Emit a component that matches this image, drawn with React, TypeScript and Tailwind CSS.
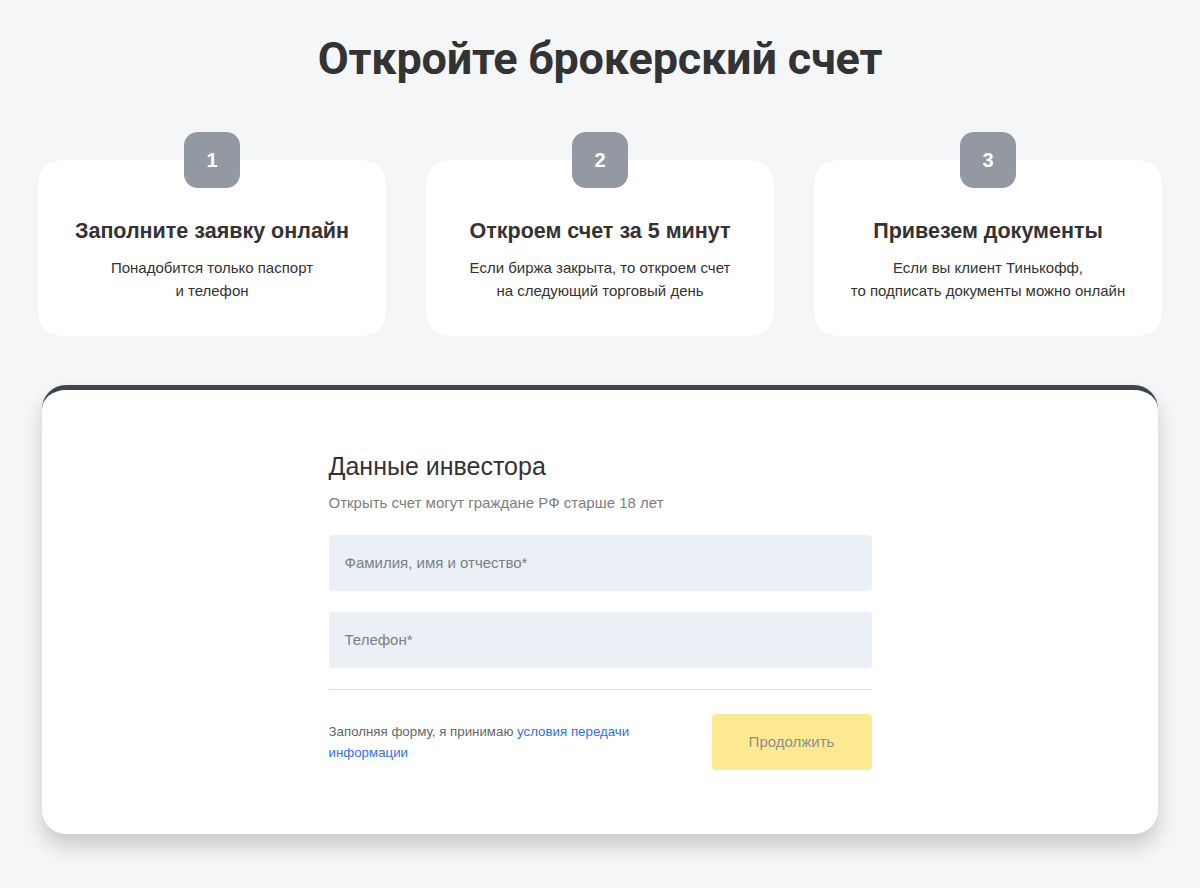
const steps = [
  { n: 1, title: 'Заполните заявку онлайн', text: ['Понадобится только паспорт', 'и телефон'] },
  { n: 2, title: 'Откроем счет за 5 минут', text: ['Если биржа закрыта, то откроем счет', 'на следующий торговый день'] },
  { n: 3, title: 'Привезем документы', text: ['Если вы клиент Тинькофф,', 'то подписать документы можно онлайн'] },
];

export default function App() {
  return (
    <div className="min-h-[888px] bg-[#f5f6f8] font-['Liberation_Sans',Arial,sans-serif] text-[#333333]">
      <h1 className="pt-[33px] text-center font-['Roboto',sans-serif] text-[45px] font-bold leading-[52px] tracking-[-0.2px] text-[#333333]">
        Откройте брокерский счет
      </h1>

      <div className="mx-[38px] mt-[47px] grid grid-cols-3 gap-[40px]">
        {steps.map((s) => (
          <div key={s.n} className="relative mt-[28px] h-[176px] rounded-[24px] bg-white pt-[57px] text-center">
            <div className="absolute left-1/2 top-[-28px] flex h-[56px] w-[56px] -translate-x-1/2 items-center justify-center rounded-[14px] bg-[#9299a2] text-[20px] font-bold text-white">
              {s.n}
            </div>
            <div className="text-[21.5px] font-bold leading-[28px] text-[#333333]">{s.title}</div>
            <div className="mt-[11px] text-[15px] leading-[23px] text-[#333333]">
              {s.text[0]}
              <br />
              {s.text[1]}
            </div>
          </div>
        ))}
      </div>

      <div className="mx-[42px] mt-[49px] rounded-[24px] border-t-[5px] border-[#3e4452] bg-white pb-[64px] pt-[60px] shadow-[0_12px_20px_rgba(0,0,0,0.18)]">
        <div className="mx-auto w-[543px]">
          <h2 className="text-[25px] leading-[32px] text-[#333333]">Данные инвестора</h2>
          <p className="mt-[11px] text-[15px] leading-[20px] text-[#808080]">Открыть счет могут граждане РФ старше 18 лет</p>
          <div className="mt-[22px] flex h-[56px] items-center rounded-[4px] bg-[#ebf0f7] px-[16px] text-[15px] text-[#7a7f87]">
            Фамилия, имя и отчество*
          </div>
          <div className="mt-[21px] flex h-[56px] items-center rounded-[4px] bg-[#ebf0f7] px-[16px] text-[15px] text-[#7a7f87]">
            Телефон*
          </div>
          <div className="mt-[21px] h-px bg-[#dddddd]" />
          <div className="mt-[24px] flex items-center justify-between">
            <p className="w-[330px] text-[13.3px] leading-[21px] text-[#666666]">
              Заполняя форму, я принимаю{' '}
              <a className="text-[#336fee]">
                условия передачи
                <br />
                информации
              </a>
            </p>
            <button className="h-[56px] w-[160px] rounded-[4px] bg-[#fee993] text-[15px] text-[#8f8f8f]">Продолжить</button>
          </div>
        </div>
      </div>
    </div>
  );
}
